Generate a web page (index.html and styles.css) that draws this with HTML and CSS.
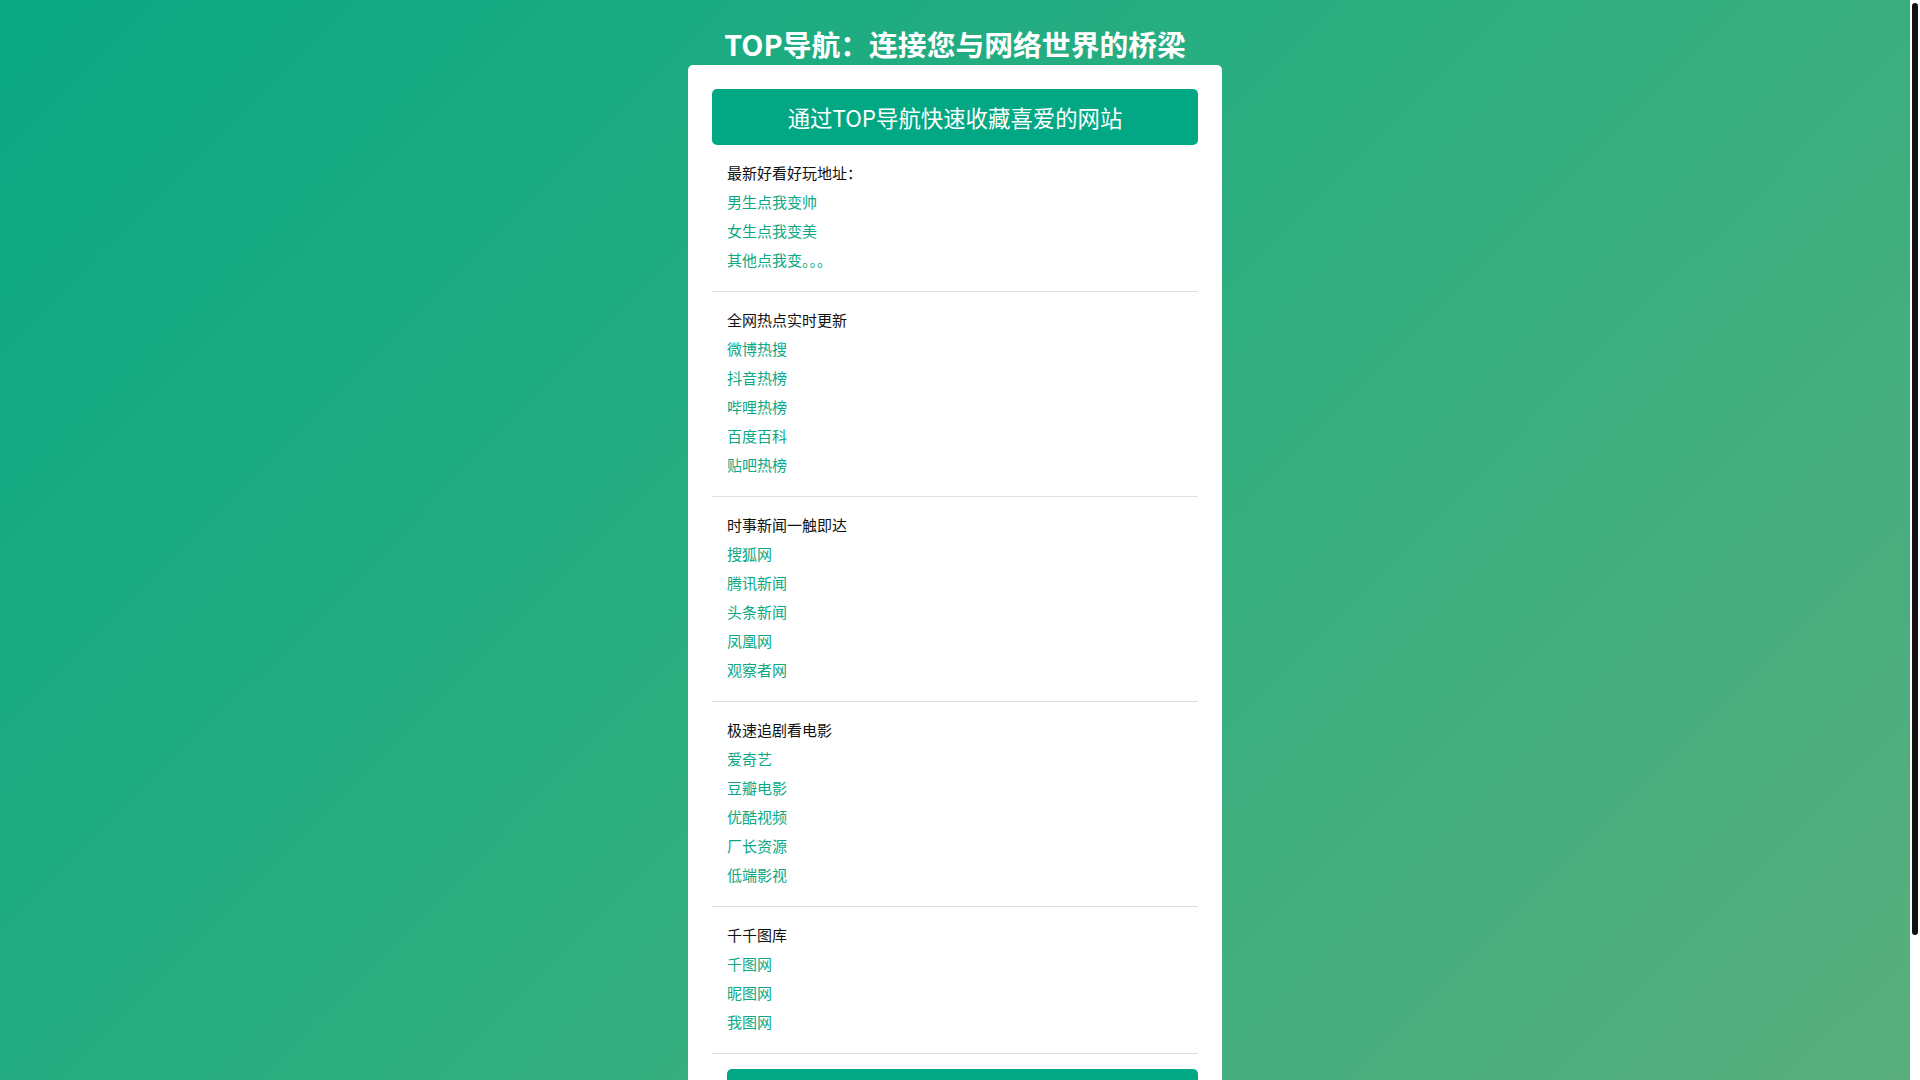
FILE: index.html
```html
<!DOCTYPE html>
<html lang="zh-CN">
<head>
<meta charset="utf-8">
<title>TOP导航</title>
<link rel="stylesheet" href="styles.css">
</head>
<body>
<h1 class="site-title">TOP导航：连接您与网络世界的桥梁</h1>
<main class="card">
  <div class="banner">通过TOP导航快速收藏喜爱的网站</div>

  <section class="group">
    <div class="group-title">最新好看好玩地址：</div>
    <a class="link" href="#">男生点我变帅</a>
    <a class="link" href="#">女生点我变美</a>
    <a class="link" href="#">其他点我变。。。</a>
  </section>

  <section class="group">
    <div class="group-title">全网热点实时更新</div>
    <a class="link" href="#">微博热搜</a>
    <a class="link" href="#">抖音热榜</a>
    <a class="link" href="#">哔哩热榜</a>
    <a class="link" href="#">百度百科</a>
    <a class="link" href="#">贴吧热榜</a>
  </section>

  <section class="group">
    <div class="group-title">时事新闻一触即达</div>
    <a class="link" href="#">搜狐网</a>
    <a class="link" href="#">腾讯新闻</a>
    <a class="link" href="#">头条新闻</a>
    <a class="link" href="#">凤凰网</a>
    <a class="link" href="#">观察者网</a>
  </section>

  <section class="group">
    <div class="group-title">极速追剧看电影</div>
    <a class="link" href="#">爱奇艺</a>
    <a class="link" href="#">豆瓣电影</a>
    <a class="link" href="#">优酷视频</a>
    <a class="link" href="#">厂长资源</a>
    <a class="link" href="#">低端影视</a>
  </section>

  <section class="group">
    <div class="group-title">千千图库</div>
    <a class="link" href="#">千图网</a>
    <a class="link" href="#">昵图网</a>
    <a class="link" href="#">我图网</a>
  </section>

  <div class="bottom-btn"></div>
</main>
<div class="scrollbar" aria-hidden="true"><div class="scrollbar-thumb"></div></div>
</body>
</html>
```

FILE: styles.css
```css
html {
  background: #10a982;
  scrollbar-width: none;
}
::-webkit-scrollbar {
  display: none;
}
body {
  margin: 0;
  padding: 0 10px 102px 0;
  min-height: 100vh;
  box-sizing: border-box;
  font-family: "Noto Sans CJK SC", "Liberation Sans", sans-serif;
  background: linear-gradient(135deg, #0aa883 0%, #2aae80 45%, #5aae7e 100%);
  background-attachment: fixed;
}
.scrollbar {
  position: fixed;
  top: 0;
  right: 0;
  width: 10px;
  height: 100vh;
  background: #fff;
}
.scrollbar-thumb {
  margin: 3px 2px 0;
  height: 932px;
  background: #111;
  border-radius: 3px;
}
.site-title {
  margin: 23px 0 0;
  font-size: 28.8px;
  line-height: 42px;
  font-weight: 700;
  color: #fff;
  text-align: center;
}
.card {
  width: 534px;
  box-sizing: border-box;
  margin: 0 auto;
  padding: 24px;
  background: #fff;
  border-radius: 5px;
}
.banner {
  height: 56px;
  line-height: 56px;
  background: #02a884;
  color: #fff;
  font-size: 22.4px;
  text-align: center;
  border-radius: 5px;
}
.group {
  display: flex;
  flex-direction: column;
  align-items: flex-start;
  padding: 13px 15px 17px;
  border-bottom: 1px solid #dedede;
}
.group-title {
  font-size: 15px;
  line-height: 29px;
  color: #111;
}
.link {
  font-size: 15px;
  line-height: 29px;
  color: #0ca884;
  text-decoration: none;
}
.bottom-btn {
  margin: 15px 0 0 15px;
  height: 56px;
  background: #02a884;
  border-radius: 5px;
}
```
